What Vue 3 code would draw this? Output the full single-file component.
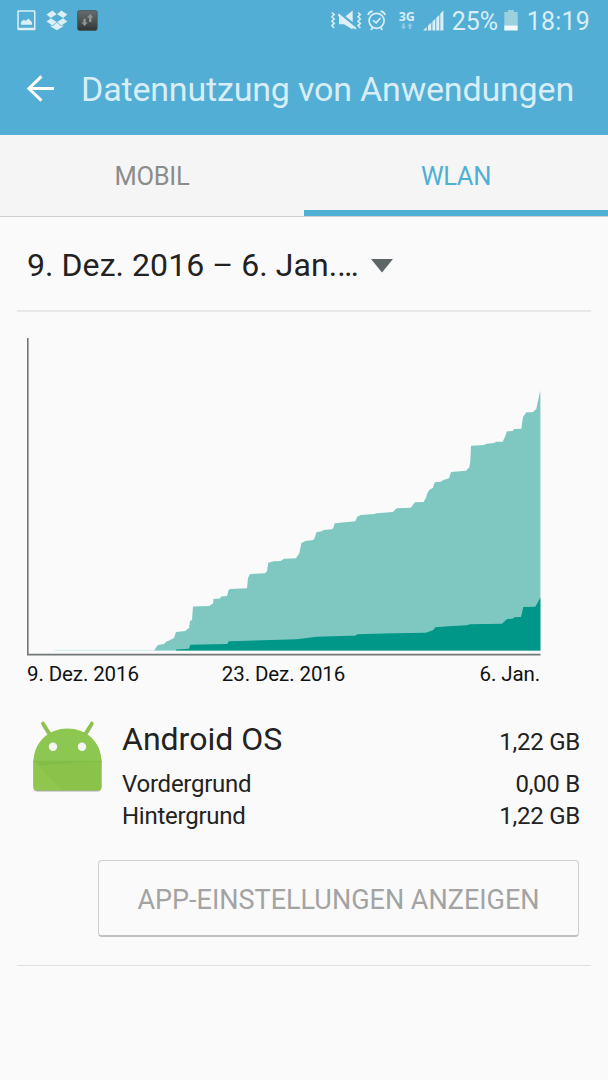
<template>
  <div class="screen">
    <header class="header">
      <div class="status-bar">
        <div class="status-left">
          <svg class="icon-picture" width="20" height="22" viewBox="0 0 20 22">
            <path d="M2 0.2H19V1L19.500 1V19.500L19 20.200H2L1.300 19.500V1ZM2.800 1.700V17.700H18V1.700Z" fill="#dceef6" fill-rule="evenodd" />
            <path d="M5 14.800V12L8 9.600L9.500 11L12.500 8.600L16 12.300V14.800Z" fill="#dceef6" />
          </svg>
          <svg class="icon-dropbox" width="22" height="22" viewBox="0 0 22 22">
            <g fill="#dceef6">
              <path d="M6.4 0.6L10.7 4.2L4.7 7.9L0.5 4.6Z" />
              <path d="M15.4 0.6L21.3 4.6L17.1 7.9L11.1 4.2Z" />
              <path d="M4.7 8.3L10.7 12L6.4 15.5L0.5 11.6Z" />
              <path d="M17.1 8.3L21.3 11.6L15.4 15.5L11.1 12Z" />
              <path d="M10.9 12.6L15.3 16.3L17.2 15.2V16.6L10.9 20.3L4.6 16.6V15.2L6.5 16.3Z" />
            </g>
          </svg>
          <svg class="icon-traffic" width="22" height="22" viewBox="0 0 22 22">
            <defs>
              <linearGradient id="trafficFill" x1="0" y1="0" x2="0" y2="1">
                <stop offset="0" stop-color="#686b6c" />
                <stop offset="0.5" stop-color="#505354" />
                <stop offset="1" stop-color="#303334" />
              </linearGradient>
            </defs>
            <rect x="0.6" y="0.6" width="19.6" height="19.8" rx="1.8" fill="url(#trafficFill)" stroke="#3f5558" stroke-width="0.8" />
            <path d="M13.2 4L16.4 7.6H14.4V12H12V7.6H10Z" fill="#8b9597" />
            <path d="M7.6 16L4.4 12.4H6.4V8.8H8.8V12.4H10.8Z" fill="#8b9597" />
          </svg>
        </div>
        <div class="status-right">
          <svg class="icon-mute" width="32" height="22" viewBox="0 0 32 22">
            <g fill="none" stroke="#dceef6" stroke-width="1.5">
              <path d="M0.8 2.5L3.2 4.600L0.8 6.800L3.2 9L0.8 11.200L3.2 13.400L0.8 15.600L3.2 18" />
              <path d="M27 2.500L29.400 4.600L27 6.800L29.400 9L27 11.200L29.400 13.400L27 15.600L29.400 18" />
            </g>
            <path d="M7.800 3.500L25.500 18L24.500 19.500L21.600 17.800V19.500L13 14.300H8V6.900L6.800 5Z" fill="#dceef6" />
            <path d="M14.500 6.200L21.700 0.600V12Z" fill="#dceef6" />
          </svg>
          <svg class="icon-alarm" width="20" height="22" viewBox="0 0 20 22">
            <g fill="none" stroke="#dceef6" stroke-width="1.700">
              <circle cx="9.600" cy="10.800" r="7.500" />
              <path d="M6 10.400L9.200 12.900L13.500 8M5.500 17.400L4 20M13.700 17.400L15.200 20" />
              <path d="M1 5C1.700 3.100 3.400 1.700 5.600 1.200M18.200 5C17.500 3.100 15.800 1.700 13.600 1.200" />
            </g>
          </svg>
          <div class="network">
            <span class="network-type">3G</span>
            <svg width="14" height="8" viewBox="0 0 14 8" fill="#91cae2">
              <path d="M3.5 6.600L0.700 3.500H2.300V0.500H4.700V3.500H6.300Z" />
              <path d="M10 0L12.800 3.100H11.200V6H8.800V3.100H7.200Z" />
            </svg>
          </div>
          <svg class="icon-signal" width="21" height="22" viewBox="0 0 21 22">
            <g fill="#dceef6">
              <path d="M0 20.500L3.700 17V20.500Z" />
              <path d="M5 15.800L8.300 12.600V20.500H5Z" />
              <path d="M9.400 11.800L12.300 8.800V20.500H9.400Z" />
              <path d="M13.300 7.800L16.300 4.900V20.500H13.300Z" />
              <path d="M17.300 3.700L20.400 0.300V20.500H17.300Z" />
            </g>
          </svg>
          <span class="battery-level">25%</span>
          <svg class="icon-battery" width="14" height="22" viewBox="0 0 14 22">
            <path d="M4 0H10V2H13.700V16H0.300V2H4Z" fill="#9bd0df" />
            <rect x="0.300" y="15.600" width="13.400" height="4.900" fill="#f2f9fc" />
          </svg>
          <span class="clock">18:19</span>
        </div>
      </div>
      <div class="title-bar">
        <svg class="back" width="28" height="28" viewBox="0 0 28 28">
          <path d="M15.500 1.300L2.900 13.500L15.500 25.700M2.900 13.500H28" fill="none" stroke="#fff" stroke-width="3" />
        </svg>
        <h1 class="title">Datennutzung von Anwendungen</h1>
      </div>
    </header>

    <nav class="tabs">
      <button
        v-for="tab in tabs"
        :key="tab"
        :class="['tab', { active: tab === activeTab }]"
        @click="activeTab = tab"
      >
        <span>{{ tab }}</span>
      </button>
    </nav>

    <main class="content">
      <div class="period">
        <span class="period-text">9. Dez. 2016 – 6. Jan.…</span>
        <svg width="22" height="14" viewBox="0 0 22 14">
          <path d="M0 0H22L11 13.500Z" fill="#5f6668" />
        </svg>
      </div>

      <section class="usage">
        <svg class="chart" width="514" height="318" viewBox="27 338 514 318">
          <path d="M55 650.300H541" stroke="#cfeaea" stroke-width="1" />
          <polygon :points="toPoints(total)" fill="#7fc8c2" />
          <polygon :points="toPoints(background)" fill="#009688" />
          <path d="M27.800 338V654.600H540.500" fill="none" stroke="#717778" stroke-width="1.600" />
        </svg>
        <div class="axis">
          <span>9. Dez. 2016</span>
          <span>23. Dez. 2016</span>
          <span>6. Jan.</span>
        </div>
      </section>

      <section class="app">
        <svg class="app-icon" width="76" height="76" viewBox="0 0 76 76">
          <g class="robot">
            <path d="M13 3.300L20 14.500M61.800 3.300L55 14.500" stroke="#8bc34a" stroke-width="3.400" stroke-linecap="round" />
            <path d="M3.500 42.500C3.500 22 18.500 8.500 37.500 8.500S71.500 22 71.500 42.500Z" fill="#8cc751" />
            <path d="M3.500 41H71.500V66.500Q71.500 70.500 67.500 70.500H7.500Q3.500 70.500 3.500 66.500Z" fill="#8bc34a" />
          </g>
          <path d="M5 42L32 70H7.500Q3.500 70 3.500 66.500V42Z" fill="#8ec64e" />
          <path d="M3.500 41.300H71.500" stroke="#80bd47" stroke-width="1" />
          <path d="M7 42.500L55 41.800L10 45.500Z" fill="#82bc46" />
          <circle cx="23" cy="26.800" r="4.200" fill="#f5f5f5" />
          <circle cx="52" cy="26.800" r="4.200" fill="#f5f5f5" />
        </svg>
        <div class="app-rows">
          <div class="row row-main">
            <span class="app-name">Android OS</span>
            <span class="app-total">1,22 GB</span>
          </div>
          <div v-for="item in details" :key="item.label" class="row">
            <span>{{ item.label }}</span>
            <span>{{ item.value }}</span>
          </div>
        </div>
      </section>

      <div class="actions">
        <button class="settings-button"><span>APP-EINSTELLUNGEN ANZEIGEN</span></button>
      </div>
    </main>
  </div>
</template>

<script setup>
import { ref } from 'vue';

const tabs = ['MOBIL', 'WLAN'];
const activeTab = ref('WLAN');

const details = [
  { label: 'Vordergrund', value: '0,00 B' },
  { label: 'Hintergrund', value: '1,22 GB' }
];

const baseline = 650.4;

const total = [
  [154.5, 650], [156, 647.5], [158, 645], [164, 644], [166, 641.7], [168, 641], [174, 638],
  [176, 632], [185, 631], [189, 628], [190, 621], [192, 620], [193, 606.5], [209, 606],
  [213, 603.5], [213.5, 599], [220, 598.5], [221, 596.5], [227, 596], [228.5, 590], [230, 589],
  [247, 588.3], [248, 578], [250, 574], [265, 573.3], [267, 571], [268.3, 562.7], [274, 561.3],
  [280.7, 561], [284, 558.7], [296, 558.3], [299.3, 553.3], [301.3, 543.3], [305.3, 541],
  [313.3, 540], [315, 537.3], [316.3, 532.3], [321.7, 531.3], [323.7, 530], [331.7, 529.3],
  [333.3, 528], [334.7, 523.3], [355.3, 521.3], [357.3, 516.7], [360.7, 515], [374.3, 514],
  [376.7, 513.3], [392.7, 512], [396.7, 508.3], [410.7, 507.7], [415, 502.3], [423.7, 502],
  [426, 497.7], [427, 494], [429.3, 490], [433, 487.7], [434.7, 482.3], [440.7, 481.7],
  [443.3, 480], [449, 478.3], [451, 472], [466, 470.7], [469.3, 467.3], [470.3, 461.7],
  [471, 445.7], [484, 445], [486.7, 443.7], [494.3, 443], [496, 441.7], [502.7, 441.7],
  [505, 436.7], [507, 431.3], [512.7, 431], [514, 429], [521.3, 428.7], [523, 417],
  [526.3, 412.3], [532.7, 412.3], [536.3, 409], [538, 400.7], [540.4, 390.5]
];

const background = [
  [176, 649.5], [189, 648.7], [190.3, 644.7], [227.3, 644], [228.7, 641.3], [296.7, 639.3],
  [316.7, 636.7], [350, 635.7], [355.3, 635.7], [357.3, 634.3], [393.3, 633.3], [426, 632.7],
  [433.3, 630], [435.3, 627.3], [448.3, 626.3], [466.7, 625.3], [470, 624.3], [502, 623.7],
  [507, 619], [512.7, 618.7], [514.3, 617.3], [521, 617], [523.3, 607], [535.3, 606.7],
  [540.4, 597.5]
];

// close the series down to the baseline
function toPoints(series) {
  const first = series[0][0];
  const last = series[series.length - 1][0];
  return [[first, baseline], ...series, [last, baseline]].map((p) => p.join(',')).join(' ');
}
</script>

<style>
body {
  background: #fafafa;
}
</style>

<style scoped>
.screen {
  width: 608px;
  height: 1080px;
  overflow: hidden;
  background: #fafafa;
  color: #222;
  font-family: Roboto, 'Liberation Sans', sans-serif;
}

.screen svg {
  display: block;
  flex: none;
}

button {
  font-family: inherit;
  cursor: pointer;
}

.header {
  height: 135px;
  background: #52aed4;
  color: #d8edf6;
}

.status-bar {
  display: flex;
  justify-content: space-between;
  height: 42px;
  padding: 10px 18px 0 16px;
  box-sizing: border-box;
}

.status-left,
.status-right {
  display: flex;
  align-items: flex-start;
}

.icon-dropbox {
  margin-left: 10px;
}

.icon-traffic {
  margin-left: 9px;
}

.icon-alarm {
  margin-left: 4px;
}

.network {
  display: flex;
  flex-direction: column;
  align-items: center;
  width: 16px;
  margin-left: 12px;
}

.network-type {
  font-family: 'Open Sans', sans-serif;
  font-size: 12.5px;
  font-weight: 700;
  line-height: 13px;
}

.icon-signal {
  margin-left: 8px;
}

.battery-level {
  margin-left: 8px;
  font-size: 25px;
  line-height: 23px;
  width: 47px;
  white-space: nowrap;
}

.icon-battery {
  margin-left: 5px;
}

.clock {
  margin-left: 9px;
  font-size: 25px;
  letter-spacing: 0.2px;
  line-height: 23px;
}

.title-bar {
  display: flex;
  align-items: center;
  height: 93px;
  padding: 0 0 0 26px;
  box-sizing: border-box;
}

.title {
  margin: 1px 0 0 27px;
  font-size: 34px;
  font-weight: 400;
  letter-spacing: -0.18px;
  line-height: 40px;
  white-space: nowrap;
}

.tabs {
  display: flex;
  height: 82px;
  box-sizing: border-box;
  background: #f5f5f5;
  border-bottom: 1px solid #cfcfcf;
}

.tab {
  flex: 1;
  padding: 7px 0 0;
  border: none;
  border-bottom: 6px solid transparent;
  background: none;
  color: #8c8c8c;
  font-size: 25.5px;
  letter-spacing: -0.3px;
}

.tab.active {
  border-bottom-color: #4fb0d4;
  color: #4fb0d4;
}

.content {
  margin: 0 17px;
}

.period {
  display: flex;
  align-items: center;
  gap: 12px;
  height: 95px;
  padding: 2px 0 0 10px;
  box-sizing: border-box;
  border-bottom: 2px solid #e8e8e8;
}

.period-text {
  font-size: 32px;
  letter-spacing: 0.06px;
  line-height: 40px;
  white-space: nowrap;
}

.period svg {
  margin-top: 3px;
}

.usage {
  width: 513px;
  padding: 26px 0 0 10px;
}

.axis {
  display: grid;
  grid-template-columns: 1fr auto 1fr;
  margin-top: 5px;
  color: #111;
  font-size: 20.5px;
  letter-spacing: -0.1px;
  line-height: 26px;
}

.axis span:last-child {
  text-align: right;
}

.app {
  display: flex;
  padding: 32px 11px 0 13px;
}

.app-icon {
  margin-top: 1px;
}

.robot {
  filter: drop-shadow(0 1px 0.5px rgba(0, 0, 0, 0.3));
}

.app-rows {
  flex: 1;
  margin-left: 16px;
}

.row {
  display: flex;
  justify-content: space-between;
  align-items: baseline;
  font-size: 24px;
  letter-spacing: -0.25px;
  line-height: 32px;
}

.row-main {
  line-height: 40px;
  margin-bottom: 6px;
}

.app-name {
  font-size: 32px;
  letter-spacing: 0;
}

.actions {
  display: flex;
  justify-content: flex-end;
  padding: 28px 12px 28px 0;
  border-bottom: 1px solid #e0e0e0;
}

.settings-button {
  width: 481px;
  height: 77px;
  padding: 3px 0 0;
  border: 1px solid #cfcfcf;
  border-bottom: 2px solid #bfc1c1;
  border-radius: 4px;
  background: #fafafa;
  color: #a3a3a3;
  font-size: 27px;
}
</style>
